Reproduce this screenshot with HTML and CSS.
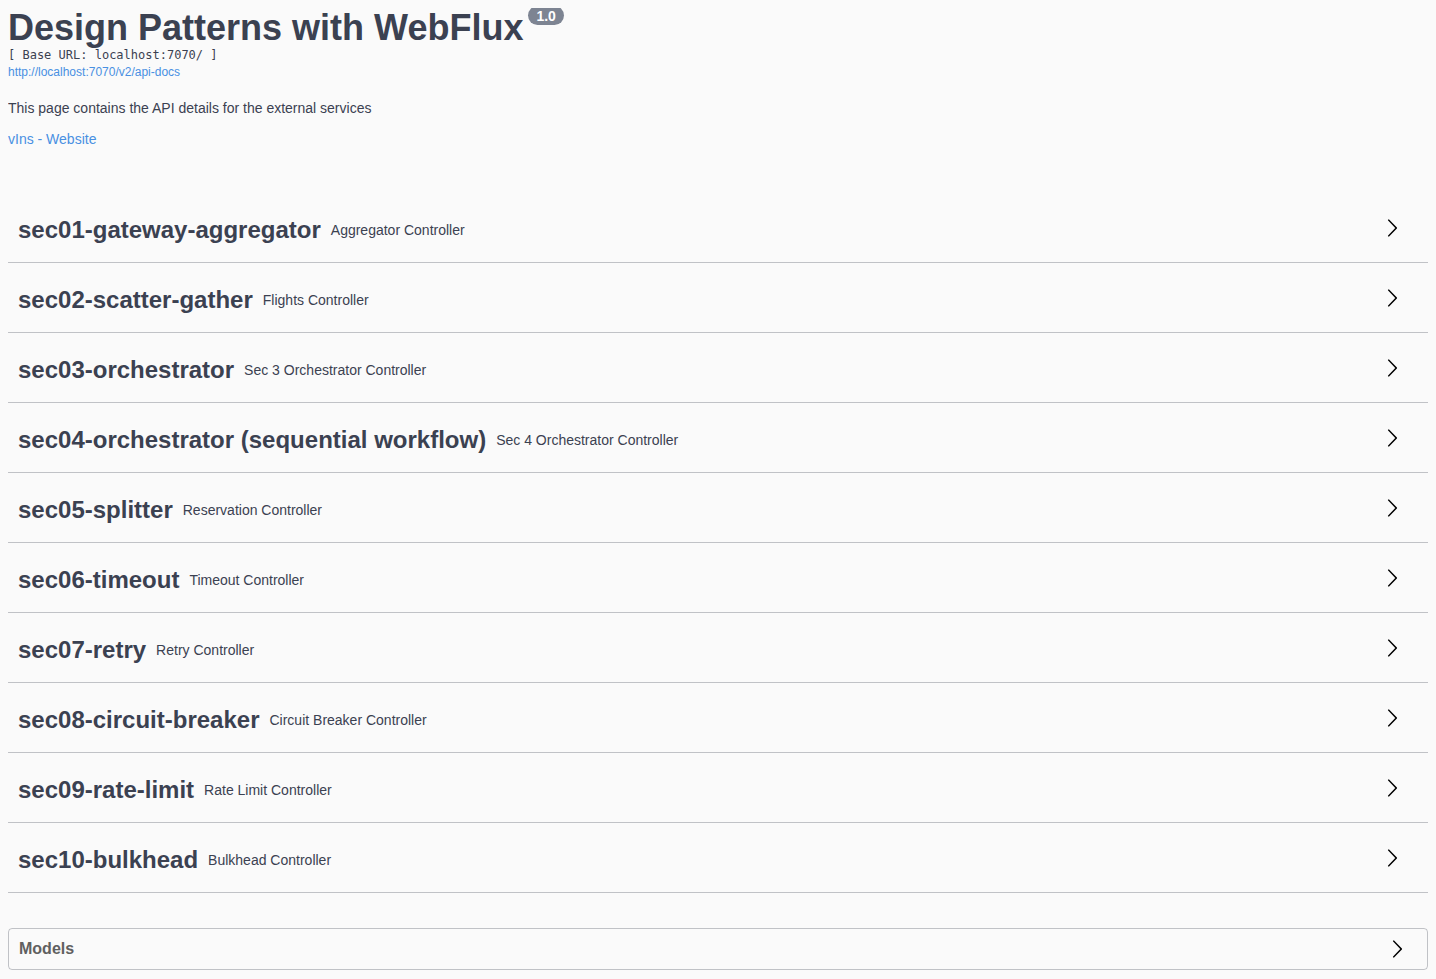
FILE: index.html
```html
<!DOCTYPE html>
<html lang="en">
<head>
<meta charset="utf-8">
<title>Design Patterns with WebFlux</title>
<link rel="stylesheet" href="styles.css">
</head>
<body>
<div class="info">
  <div class="main">
    <h2 class="title">Design Patterns with WebFlux<span class="version">1.0</span></h2>
    <pre class="base-url">[ Base URL: localhost:7070/ ]</pre>
    <a class="spec-link" href="#">http://localhost:7070/v2/api-docs</a>
  </div>
  <p class="description">This page contains the API details for the external services</p>
  <a class="site-link" href="#">vIns - Website</a>
</div>

<div class="tags">
  <div class="tag-section"><h3 class="tag"><span class="tag-name">sec01-gateway-aggregator</span><small class="tag-desc">Aggregator Controller</small><span class="arrow"><svg viewBox="0 0 20 20" width="20" height="20"><path d="M13.25 10L6.109 2.58c-.268-.27-.268-.707 0-.979.268-.27.701-.27.969 0l7.83 7.908c.268.271.268.709 0 .979l-7.83 7.908c-.268.271-.701.27-.969 0-.268-.269-.268-.707 0-.979L13.25 10z"/></svg></span></h3></div>
  <div class="tag-section"><h3 class="tag"><span class="tag-name">sec02-scatter-gather</span><small class="tag-desc">Flights Controller</small><span class="arrow"><svg viewBox="0 0 20 20" width="20" height="20"><path d="M13.25 10L6.109 2.58c-.268-.27-.268-.707 0-.979.268-.27.701-.27.969 0l7.83 7.908c.268.271.268.709 0 .979l-7.83 7.908c-.268.271-.701.27-.969 0-.268-.269-.268-.707 0-.979L13.25 10z"/></svg></span></h3></div>
  <div class="tag-section"><h3 class="tag"><span class="tag-name">sec03-orchestrator</span><small class="tag-desc">Sec 3 Orchestrator Controller</small><span class="arrow"><svg viewBox="0 0 20 20" width="20" height="20"><path d="M13.25 10L6.109 2.58c-.268-.27-.268-.707 0-.979.268-.27.701-.27.969 0l7.83 7.908c.268.271.268.709 0 .979l-7.83 7.908c-.268.271-.701.27-.969 0-.268-.269-.268-.707 0-.979L13.25 10z"/></svg></span></h3></div>
  <div class="tag-section"><h3 class="tag"><span class="tag-name">sec04-orchestrator (sequential workflow)</span><small class="tag-desc">Sec 4 Orchestrator Controller</small><span class="arrow"><svg viewBox="0 0 20 20" width="20" height="20"><path d="M13.25 10L6.109 2.58c-.268-.27-.268-.707 0-.979.268-.27.701-.27.969 0l7.83 7.908c.268.271.268.709 0 .979l-7.83 7.908c-.268.271-.701.27-.969 0-.268-.269-.268-.707 0-.979L13.25 10z"/></svg></span></h3></div>
  <div class="tag-section"><h3 class="tag"><span class="tag-name">sec05-splitter</span><small class="tag-desc">Reservation Controller</small><span class="arrow"><svg viewBox="0 0 20 20" width="20" height="20"><path d="M13.25 10L6.109 2.58c-.268-.27-.268-.707 0-.979.268-.27.701-.27.969 0l7.83 7.908c.268.271.268.709 0 .979l-7.83 7.908c-.268.271-.701.27-.969 0-.268-.269-.268-.707 0-.979L13.25 10z"/></svg></span></h3></div>
  <div class="tag-section"><h3 class="tag"><span class="tag-name">sec06-timeout</span><small class="tag-desc">Timeout Controller</small><span class="arrow"><svg viewBox="0 0 20 20" width="20" height="20"><path d="M13.25 10L6.109 2.58c-.268-.27-.268-.707 0-.979.268-.27.701-.27.969 0l7.83 7.908c.268.271.268.709 0 .979l-7.83 7.908c-.268.271-.701.27-.969 0-.268-.269-.268-.707 0-.979L13.25 10z"/></svg></span></h3></div>
  <div class="tag-section"><h3 class="tag"><span class="tag-name">sec07-retry</span><small class="tag-desc">Retry Controller</small><span class="arrow"><svg viewBox="0 0 20 20" width="20" height="20"><path d="M13.25 10L6.109 2.58c-.268-.27-.268-.707 0-.979.268-.27.701-.27.969 0l7.83 7.908c.268.271.268.709 0 .979l-7.83 7.908c-.268.271-.701.27-.969 0-.268-.269-.268-.707 0-.979L13.25 10z"/></svg></span></h3></div>
  <div class="tag-section"><h3 class="tag"><span class="tag-name">sec08-circuit-breaker</span><small class="tag-desc">Circuit Breaker Controller</small><span class="arrow"><svg viewBox="0 0 20 20" width="20" height="20"><path d="M13.25 10L6.109 2.58c-.268-.27-.268-.707 0-.979.268-.27.701-.27.969 0l7.83 7.908c.268.271.268.709 0 .979l-7.83 7.908c-.268.271-.701.27-.969 0-.268-.269-.268-.707 0-.979L13.25 10z"/></svg></span></h3></div>
  <div class="tag-section"><h3 class="tag"><span class="tag-name">sec09-rate-limit</span><small class="tag-desc">Rate Limit Controller</small><span class="arrow"><svg viewBox="0 0 20 20" width="20" height="20"><path d="M13.25 10L6.109 2.58c-.268-.27-.268-.707 0-.979.268-.27.701-.27.969 0l7.83 7.908c.268.271.268.709 0 .979l-7.83 7.908c-.268.271-.701.27-.969 0-.268-.269-.268-.707 0-.979L13.25 10z"/></svg></span></h3></div>
  <div class="tag-section"><h3 class="tag"><span class="tag-name">sec10-bulkhead</span><small class="tag-desc">Bulkhead Controller</small><span class="arrow"><svg viewBox="0 0 20 20" width="20" height="20"><path d="M13.25 10L6.109 2.58c-.268-.27-.268-.707 0-.979.268-.27.701-.27.969 0l7.83 7.908c.268.271.268.709 0 .979l-7.83 7.908c-.268.271-.701.27-.969 0-.268-.269-.268-.707 0-.979L13.25 10z"/></svg></span></h3></div>
</div>

<section class="models">
  <h4 class="models-head"><span>Models</span><span class="arrow models-arrow"><svg viewBox="0 0 20 20" width="20" height="20"><path d="M13.25 10L6.109 2.58c-.268-.27-.268-.707 0-.979.268-.27.701-.27.969 0l7.83 7.908c.268.271.268.709 0 .979l-7.83 7.908c-.268.271-.701.27-.969 0-.268-.269-.268-.707 0-.979L13.25 10z"/></svg></span></h4>
</section>
</body>
</html>
```

FILE: styles.css
```css
html, body {
  background: #fafafa;
}
body {
  margin: 8px;
  font-family: "Liberation Sans", Arial, sans-serif;
  color: #3b4151;
}
.info {
  margin: 0 0 50px;
}
.main {
  margin: 0 0 19px;
}
.title {
  margin: 0;
  font-size: 36px;
  line-height: 39px;
  font-weight: bold;
  color: #3b4151;
}
.version {
  display: inline-block;
  vertical-align: top;
  margin: -2px 0 0 5px;
  padding: 2px 8px 1px;
  border-radius: 57px;
  background: #7d8492;
  color: #fff;
  font-size: 14px;
  line-height: 16px;
  font-weight: bold;
}
.base-url {
  margin: 0;
  font-family: "DejaVu Sans Mono", monospace;
  font-size: 12px;
  line-height: 16px;
  color: #3b4151;
}
.spec-link {
  display: block;
  font-size: 12px;
  line-height: 18px;
  color: #4990e2;
  text-decoration: none;
}
.description {
  margin: 0 0 14px;
  font-size: 14px;
  line-height: 17px;
}
.site-link {
  display: block;
  font-size: 14px;
  line-height: 17px;
  color: #4990e2;
  text-decoration: none;
}
.tags {
  display: flex;
  flex-direction: column;
}
.tag-section {
  margin: 0 0 5px;
}
.tag {
  display: flex;
  align-items: center;
  margin: 0;
  height: 44px;
  padding: 10px 20px 10px 10px;
  border-bottom: 1px solid rgba(59, 65, 81, 0.3);
  font-size: 24px;
  color: #3b4151;
}
.tag-name {
  font-weight: bold;
}
.tag-desc {
  padding: 0 10px;
  font-size: 14px;
  font-weight: normal;
  flex: 1;
}
.arrow {
  display: flex;
  margin: 0 6px 5px 0;
}
.arrow svg {
  fill: #000;
}
.models {
  margin: 30px 0 0;
  border: 1px solid rgba(59, 65, 81, 0.3);
  border-radius: 4px;
}
.models-head {
  display: flex;
  align-items: center;
  justify-content: space-between;
  margin: 0;
  height: 20px;
  padding: 10px 20px 10px 10px;
  font-size: 16px;
  font-weight: bold;
  color: #606060;
}
.models-arrow {
  margin: 0;
}
```
